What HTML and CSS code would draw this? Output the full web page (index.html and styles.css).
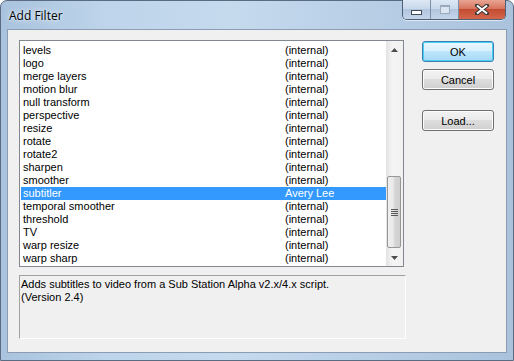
FILE: index.html
```html
<!DOCTYPE html>
<html>
<head>
<meta charset="utf-8">
<link rel="stylesheet" href="styles.css">
</head>
<body>
<div class="window">
  <div class="titlebar">
    <div class="title">Add Filter</div>
    <div class="capbtns">
      <div class="cap min"><span class="minbar"></span></div>
      <div class="cap max"><span class="maxbox"></span></div>
      <div class="cap close"><svg width="14" height="11" viewBox="0 0 14 11"><path d="M2 1.5 L12 9.5 M12 1.5 L2 9.5" stroke="#3a3a3a" stroke-width="4" stroke-linecap="square" fill="none"/><path d="M2 1.5 L12 9.5 M12 1.5 L2 9.5" stroke="#ffffff" stroke-width="2" fill="none"/></svg></div>
    </div>
  </div>
  <div class="client">
    <div class="left">
      <div class="listbox">
        <div class="rows">
          <div class="row"><span class="name">levels</span><span class="auth">(internal)</span></div>
          <div class="row"><span class="name">logo</span><span class="auth">(internal)</span></div>
          <div class="row"><span class="name">merge layers</span><span class="auth">(internal)</span></div>
          <div class="row"><span class="name">motion blur</span><span class="auth">(internal)</span></div>
          <div class="row"><span class="name">null transform</span><span class="auth">(internal)</span></div>
          <div class="row"><span class="name">perspective</span><span class="auth">(internal)</span></div>
          <div class="row"><span class="name">resize</span><span class="auth">(internal)</span></div>
          <div class="row"><span class="name">rotate</span><span class="auth">(internal)</span></div>
          <div class="row"><span class="name">rotate2</span><span class="auth">(internal)</span></div>
          <div class="row"><span class="name">sharpen</span><span class="auth">(internal)</span></div>
          <div class="row"><span class="name">smoother</span><span class="auth">(internal)</span></div>
          <div class="row sel"><span class="name">subtitler</span><span class="auth">Avery Lee</span></div>
          <div class="row"><span class="name">temporal smoother</span><span class="auth">(internal)</span></div>
          <div class="row"><span class="name">threshold</span><span class="auth">(internal)</span></div>
          <div class="row"><span class="name">TV</span><span class="auth">(internal)</span></div>
          <div class="row"><span class="name">warp resize</span><span class="auth">(internal)</span></div>
          <div class="row"><span class="name">warp sharp</span><span class="auth">(internal)</span></div>
        </div>
        <div class="scrollbar">
          <div class="arrow"><svg width="7" height="4" viewBox="0 0 7 4"><path d="M3.5 0 L7 4 L0 4 Z" fill="#4d4d4d"/></svg></div>
          <div class="track">
            <div class="thumb"><div class="grip"><i></i><i></i><i></i><i></i></div></div>
          </div>
          <div class="arrow"><svg width="7" height="4" viewBox="0 0 7 4"><path d="M0 0 L7 0 L3.5 4 Z" fill="#4d4d4d"/></svg></div>
        </div>
      </div>
      <div class="desc">Adds subtitles to video from a Sub Station Alpha v2.x/4.x script.<br>(Version 2.4)</div>
    </div>
    <div class="buttons">
      <div class="btn def">OK</div>
      <div class="btn">Cancel</div>
      <div class="btn load">Load...</div>
    </div>
  </div>
</div>
</body>
</html>
```
FILE: styles.css
```css
html, body {
  margin: 0;
  padding: 0;
  width: 514px;
  height: 361px;
  overflow: hidden;
  background: #ffffff;
}
.window {
  width: 514px;
  height: 361px;
  box-sizing: border-box;
  border: 1px solid #5a6c82;
  border-radius: 7px 7px 0 0;
  background: linear-gradient(90deg, #a9c3de 0%, #bdd4ea 20%, #c6daee 45%, #b8cfe6 70%, #aac2dc 100%);
  display: flex;
  flex-direction: column;
  padding: 0 6px 7px 6px;
}
.titlebar {
  height: 28px;
  display: flex;
  justify-content: space-between;
  align-items: flex-start;
}
.title {
  font-family: "Open Sans", "Liberation Sans", sans-serif;
  font-size: 12px;
  color: #000;
  padding: 6px 0 0 2px;
  text-shadow: 0 0 6px #e8f1fa, 0 0 3px #e8f1fa;
}
.capbtns {
  display: flex;
  margin-top: -1px;
  margin-right: 1px;
  border: 1px solid #4f6075;
  border-top: none;
  border-radius: 0 0 5px 5px;
  overflow: hidden;
  box-shadow: 0 1px 0 rgba(255,255,255,0.6);
}
.cap {
  height: 19px;
  display: flex;
  align-items: center;
  justify-content: center;
}
.min, .max {
  width: 27px;
  background: linear-gradient(180deg, #dde8f4 0%, #c9d8ea 45%, #b2c6de 50%, #c3d5ea 100%);
  border-right: 1px solid #7d8fa6;
}
.minbar {
  display: block;
  width: 9px;
  height: 3px;
  background: #fff;
  border: 1px solid #434d5a;
  margin-top: 5px;
}
.maxbox {
  display: block;
  width: 8px;
  height: 6px;
  border: 1px solid #9aa9bc;
  border-top-width: 2px;
  background: #dbe5f1;
}
.close {
  width: 46px;
  background: linear-gradient(180deg, #e8a593 0%, #d6745e 45%, #c44c32 50%, #d2674c 100%);
}
.client {
  flex: 1;
  background: #f0f0f0;
  border: 1px solid #8c9db3;
  display: flex;
  padding: 10px 11px 11px 11px;
  gap: 16px;
  font-family: "Liberation Sans", Tahoma, sans-serif;
  font-size: 11px;
  color: #000;
}
.left {
  display: flex;
  flex-direction: column;
  gap: 8px;
}
.listbox {
  width: 385px;
  height: 227px;
  border: 1px solid #828790;
  background: #fff;
  display: flex;
  box-sizing: border-box;
}
.rows {
  flex: 1;
  padding-top: 3px;
}
.row {
  height: 13px;
  line-height: 13px;
  display: flex;
  margin-left: 1px;
}
.row .name {
  width: 262px;
  padding-left: 2px;
}
.row.sel {
  background: #3399ff;
  color: #fff;
}
.scrollbar {
  width: 17px;
  display: flex;
  flex-direction: column;
  background: linear-gradient(90deg, #e3e3e3, #f5f5f5 40%, #f0f0f0);
}
.arrow {
  height: 17px;
  display: flex;
  align-items: center;
  justify-content: center;
}
.track {
  flex: 1;
  display: flex;
  flex-direction: column;
  justify-content: flex-end;
  padding-bottom: 1px;
}
.thumb {
  height: 72px;
  margin: 0 0 0 1px;
  width: 14px;
  border: 1px solid #979797;
  border-radius: 2px;
  box-sizing: border-box;
  background: linear-gradient(90deg, #f0f0f0 0%, #e8e8e8 45%, #d6d6d6 55%, #cfcfcf 100%);
  display: flex;
  align-items: center;
  justify-content: center;
}
.grip {
  display: flex;
  flex-direction: column;
  gap: 1px;
}
.grip i {
  display: block;
  width: 7px;
  height: 1px;
  background: #5a5a5a;
}
.desc {
  width: 387px;
  height: 64px;
  box-sizing: border-box;
  border: 1px solid;
  border-color: #a0a0a0 #ffffff #ffffff #a0a0a0;
  padding: 2px 0 0 1px;
  line-height: 13px;
}
.buttons {
  display: flex;
  flex-direction: column;
  gap: 7px;
  padding-top: 1px;
}
.btn {
  width: 72px;
  height: 21px;
  box-sizing: border-box;
  border: 1px solid #707070;
  border-radius: 3px;
  background: linear-gradient(180deg, #f2f2f2 0%, #ebebeb 45%, #dddddd 50%, #cfcfcf 100%);
  box-shadow: inset 0 0 0 1px #fcfcfc;
  display: flex;
  align-items: center;
  justify-content: center;
}
.btn.def {
  border-color: #3c7fb1;
  background: linear-gradient(180deg, #eaf6fd 0%, #d9f0fc 45%, #bee6fd 50%, #a7d9f5 100%);
  box-shadow: inset 0 0 0 1px #48d0f5;
}
.btn.load {
  margin-top: 13px;
}
```
